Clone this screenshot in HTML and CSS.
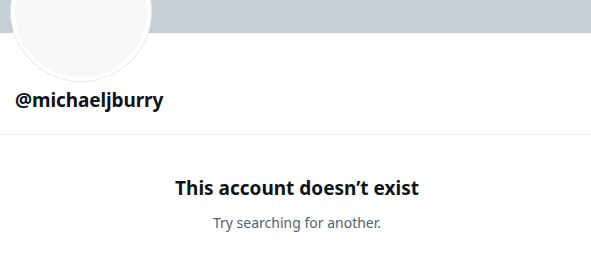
FILE: index.html
```html
<!DOCTYPE html>
<html>
<head>
<meta charset="utf-8">
<link rel="stylesheet" href="styles.css">
</head>
<body>
<div class="profile">
  <div class="banner"></div>
  <div class="head">
    <div class="avatar-row"><div class="avatar"></div></div>
    <div class="handle">@michaeljburry</div>
  </div>
  <div class="empty">
    <div class="title">This account doesn’t exist</div>
    <div class="sub">Try searching for another.</div>
  </div>
</div>
</body>
</html>
```
FILE: styles.css
```css
html, body { margin: 0; padding: 0; background: #fff; }
body { font-family: "Noto Sans", "Open Sans", sans-serif; color: #0f1419; overflow: hidden; }
.profile { width: 591px; }
.banner { height: 33px; background: #c4cfd6; }
.head { position: relative; padding: 0 15px; border-bottom: 1px solid #eff3f4; height: 102px; box-sizing: border-box; }
.avatar-row { height: 49px; }
.avatar {
  position: absolute; left: 11px; top: -92px;
  width: 132px; height: 132px; border-radius: 50%;
  background: #f7f9f9; border: 4px solid #fff;
  box-shadow: 0 0 0 1px #e6e9ea;
}
.handle { font-size: 19px; font-weight: 700; line-height: 24px; margin-top: 6px; letter-spacing: -0.1px; }
.empty { text-align: center; padding-top: 41px; padding-left: 3px; }
.title { font-size: 19px; font-weight: 700; line-height: 24px; }
.sub { font-size: 14px; color: #536471; line-height: 20px; margin-top: 13px; }
```
